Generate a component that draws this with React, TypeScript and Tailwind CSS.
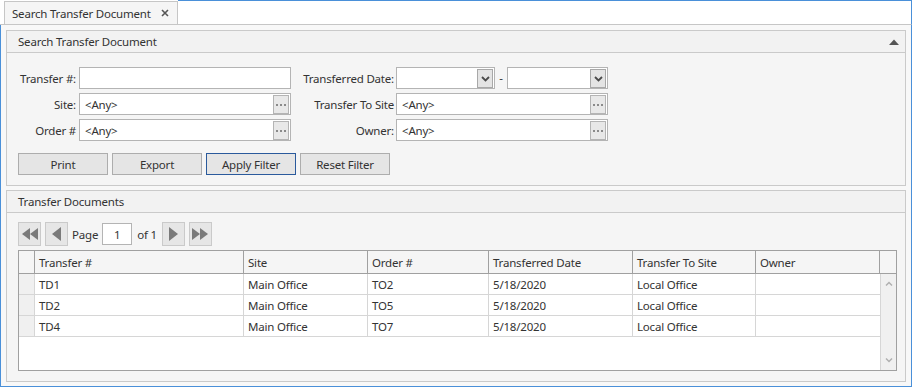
import { ReactNode } from "react";

const rows = [
  { id: "TD1", site: "Main Office", order: "TO2", date: "5/18/2020", to: "Local Office", owner: "" },
  { id: "TD2", site: "Main Office", order: "TO5", date: "5/18/2020", to: "Local Office", owner: "" },
  { id: "TD4", site: "Main Office", order: "TO7", date: "5/18/2020", to: "Local Office", owner: "" },
];

function Ellipsis() {
  return (
    <div className="w-[16px] h-[19px] my-[1px] mr-[1px] bg-[#e8e8e8] border border-[#b4b4b4] flex items-center justify-center gap-[2px]">
      <span className="w-[2px] h-[2px] bg-[#8a8a8a]" />
      <span className="w-[2px] h-[2px] bg-[#8a8a8a]" />
      <span className="w-[2px] h-[2px] bg-[#8a8a8a]" />
    </div>
  );
}

function LookupBox({ value }: { value: string }) {
  return (
    <div className="h-[22px] flex bg-white border border-[#b4b4b4]">
      <div className="flex-1 pl-[5px] pt-[1px] flex items-center text-[#333]">{value}</div>
      <Ellipsis />
    </div>
  );
}

function DateBox({ width }: { width: string }) {
  return (
    <div className={`${width} h-[22px] flex bg-white border border-[#b4b4b4]`}>
      <div className="flex-1" />
      <div className="w-[16px] h-[19px] my-[1px] mr-[1px] bg-[#e4e4e4] border border-[#a8a8a8] flex items-center justify-center">
        <svg width="9" height="6" viewBox="0 0 9 6">
          <polyline points="1,1 4.5,4.5 8,1" fill="none" stroke="#4a4a4a" strokeWidth="1.8" />
        </svg>
      </div>
    </div>
  );
}

function Label({ children }: { children: ReactNode }) {
  return <div className="h-[22px] pt-[1px] flex items-center justify-end text-[#333] whitespace-nowrap">{children}</div>;
}

function Btn({ children, primary }: { children: ReactNode; primary?: boolean }) {
  return (
    <div
      className={`w-[90px] h-[22px] pt-[1px] flex items-center justify-center text-[#333] bg-[#e5e5e5] border ${
        primary ? "border-[#2a5a9c]" : "border-[#adadad]"
      }`}
    >
      {children}
    </div>
  );
}

function PagerBtn({ children }: { children: ReactNode }) {
  return (
    <div className="w-[23px] h-[24px] bg-[#e6e6e6] border border-[#cacaca] flex items-center justify-center">
      {children}
    </div>
  );
}

function GroupBox({ title, children, collapsible, className = "" }: { title: string; children: ReactNode; collapsible?: boolean; className?: string }) {
  return (
    <div className={`border border-[#cacaca] bg-[#f5f5f5] flex flex-col ${className}`}>
      <div className="h-[22px] border-b border-[#cacaca] bg-[#f2f2f2] flex items-center pl-[11px] pr-[6px] text-[#333]">
        <span className="flex-1 pt-[1px]">{title}</span>
        {collapsible && (
          <svg width="10" height="6" viewBox="0 0 10 6">
            <polygon points="0,6 5,0.5 10,6" fill="#555" />
          </svg>
        )}
      </div>
      {children}
    </div>
  );
}

const cols = [
  { key: "id", title: "Transfer #", w: "w-[209px]" },
  { key: "site", title: "Site", w: "w-[124px]" },
  { key: "order", title: "Order #", w: "w-[121px]" },
  { key: "date", title: "Transferred Date", w: "w-[144px]" },
  { key: "to", title: "Transfer To Site", w: "w-[123px]" },
  { key: "owner", title: "Owner", w: "w-[124px]" },
] as const;

export default function App() {
  return (
    <div className="w-[912px] h-[387px] flex flex-col bg-white text-[11.5px] tracking-[-0.2px] font-['Noto_Sans',sans-serif] leading-none">
      {/* tab strip */}
      <div className="h-[25px] flex shrink-0">
        <div className="w-[4px] border-b border-[#c6c6c6]" />
        <div className="w-[174px] mt-[1px] border border-[#c6c6c6] bg-[#f5f5f5] flex items-center pl-[7px] pr-[8px] text-[#333]">
          <span className="flex-1 pt-[1px] whitespace-nowrap">Search Transfer Document</span>
          <svg width="8" height="8" viewBox="0 0 8 8">
            <path d="M1 1 L7 7 M7 1 L1 7" stroke="#555" strokeWidth="1.6" />
          </svg>
        </div>
        <div className="flex-1 border-t border-t-[#4a90d9] border-r border-r-[#4a90d9] border-b border-b-[#c6c6c6]" />
      </div>

      {/* content */}
      <div className="flex-1 flex flex-col gap-[4px] px-[5px] pt-[5px] pb-[4px] bg-[#f8f8f8] border-x border-b border-[#4a90d9]">
        <GroupBox title="Search Transfer Document" collapsible>
          <div className="pl-[11px] pt-[14px] pb-[10px]">
            <div className="grid grid-cols-[61px_212px_105px_212px] gap-y-[4px]">
              <div className="pr-[3px]"><Label>Transfer #:</Label></div>
              <div className="h-[22px] bg-white border border-[#b4b4b4]" />
              <div className="pr-[2px]"><Label>Transferred Date:</Label></div>
              <div className="flex items-center">
                <DateBox width="w-[99px]" />
                <div className="w-[12px] text-center text-[#333]">-</div>
                <DateBox width="w-[101px]" />
              </div>

              <div className="pr-[3px]"><Label>Site:</Label></div>
              <LookupBox value="<Any>" />
              <div className="pr-[2px]"><Label>Transfer To Site</Label></div>
              <LookupBox value="<Any>" />

              <div className="pr-[3px]"><Label>Order #</Label></div>
              <LookupBox value="<Any>" />
              <div className="pr-[2px]"><Label>Owner:</Label></div>
              <LookupBox value="<Any>" />
            </div>
            <div className="flex gap-[4px] mt-[12px]">
              <Btn>Print</Btn>
              <Btn>Export</Btn>
              <Btn primary>Apply Filter</Btn>
              <Btn>Reset Filter</Btn>
            </div>
          </div>
        </GroupBox>

        <GroupBox title="Transfer Documents" className="flex-1">
          <div className="flex-1 flex flex-col pl-[11px] pr-[8px] pt-[9px] pb-[10px]">
            {/* pager */}
            <div className="h-[24px] flex items-center text-[#333]">
              <PagerBtn>
                <svg width="16" height="12" viewBox="0 0 16 12">
                  <polygon points="8,0 0,6 8,12" fill="#7a7a7a" />
                  <polygon points="16,0 8,6 16,12" fill="#7a7a7a" />
                </svg>
              </PagerBtn>
              <div className="w-[4px]" />
              <PagerBtn>
                <svg width="9" height="14" viewBox="0 0 9 14">
                  <polygon points="9,0 0,7 9,14" fill="#7a7a7a" />
                </svg>
              </PagerBtn>
              <span className="ml-[4px] mr-[4px] pt-[2px]">Page</span>
              <div className="w-[30px] h-[22px] pt-[1px] bg-white border border-[#b4b4b4] flex items-center justify-center">1</div>
              <span className="ml-[5px] mr-[5px] pt-[2px]">of 1</span>
              <PagerBtn>
                <svg width="9" height="14" viewBox="0 0 9 14">
                  <polygon points="0,0 9,7 0,14" fill="#7a7a7a" />
                </svg>
              </PagerBtn>
              <div className="w-[4px]" />
              <PagerBtn>
                <svg width="16" height="12" viewBox="0 0 16 12">
                  <polygon points="0,0 8,6 0,12" fill="#7a7a7a" />
                  <polygon points="8,0 16,6 8,12" fill="#7a7a7a" />
                </svg>
              </PagerBtn>
            </div>

            {/* grid */}
            <div className="mt-[4px] flex-1 flex flex-col bg-white border border-[#a0a0a0] text-[#333]">
              <div className="h-[23px] flex border-b border-[#a0a0a0] bg-[#f5f5f5]">
                <div className="w-[16px] border-r border-[#a0a0a0]" />
                {cols.map((c) => (
                  <div key={c.key} className={`${c.w} border-r border-[#a0a0a0] pl-[4px] pt-[1px] flex items-center`}>
                    {c.title}
                  </div>
                ))}
                <div className="flex-1" />
              </div>
              <div className="flex-1 flex">
                <div className="flex-1 flex flex-col">
                  {rows.map((r) => (
                    <div key={r.id} className="h-[21px] flex border-b border-[#d6d6d6]">
                      <div className="w-[16px] border-r border-[#d6d6d6] bg-[#f0f0f0]" />
                      {cols.map((c) => (
                        <div key={c.key} className={`${c.w} border-r border-[#d6d6d6] pl-[4px] pt-[2px] flex items-center last:border-r-0`}>
                          {r[c.key]}
                        </div>
                      ))}
                    </div>
                  ))}
                </div>
                <div className="w-[17px] bg-[#f0f0f0] border-l border-[#d6d6d6] flex flex-col items-center justify-between py-[7px]">
                  <svg width="8" height="5" viewBox="0 0 8 5">
                    <polyline points="1,4.5 4,1.5 7,4.5" fill="none" stroke="#b0b0b0" strokeWidth="1.5" />
                  </svg>
                  <svg width="8" height="5" viewBox="0 0 8 5">
                    <polyline points="1,0.5 4,3.5 7,0.5" fill="none" stroke="#b0b0b0" strokeWidth="1.5" />
                  </svg>
                </div>
              </div>
            </div>
          </div>
        </GroupBox>
      </div>
    </div>
  );
}
